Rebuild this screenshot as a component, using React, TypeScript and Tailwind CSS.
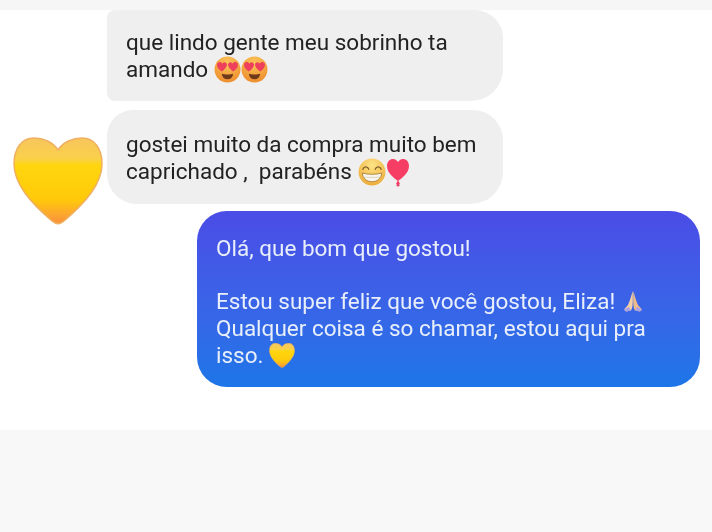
function GoldHeart({ className, id }: { className: string; id: string }) {
  return (
    <svg viewBox="0 0 90 88" className={className}>
      <defs>
        <linearGradient id={id} x1="0" y1="0" x2="0" y2="1">
          <stop offset="0" stopColor="#f7c65c" />
          <stop offset="0.24" stopColor="#fad04a" />
          <stop offset="0.32" stopColor="#ffd60e" />
          <stop offset="0.72" stopColor="#ffc90a" />
          <stop offset="0.88" stopColor="#fca92c" />
          <stop offset="1" stopColor="#f98f3b" />
        </linearGradient>
      </defs>
      <path
        d="M45 13C50 5 60 1 69 1C81 1 89 11 89 27C89 47 72 66 51 84C47 87.500 43 87.500 39 84C18 66 1 47 1 27C1 11 9 1 21 1C30 1 40 5 45 13Z"
        fill={`url(#${id})`}
        stroke="#f0b060"
        strokeWidth="1.500"
      />
    </svg>
  );
}

function HeartEyes({ id }: { id: string }) {
  return (
    <svg viewBox="0 0 26 26" className="w-[27px] h-[27px]">
      <defs>
        <radialGradient id={id} cx="50%" cy="25%" r="80%">
          <stop offset="0" stopColor="#fbc65a" />
          <stop offset="1" stopColor="#ed8a2a" />
        </radialGradient>
      </defs>
      <circle cx="13" cy="13" r="12.500" fill={`url(#${id})`} />
      <path d="M7.500 15C5 13 2.500 11 3 8C3.500 5.500 7 5 8 7.500C9 5 12.500 5.500 12.500 8.500C12.500 11 10 13 7.500 15Z" fill="#ee3f5d" />
      <path d="M18.500 15C21 13 23.500 11 23 8C22.500 5.500 19 5 18 7.500C17 5 13.500 5.500 13.500 8.500C13.500 11 16 13 18.500 15Z" fill="#ee3f5d" />
      <path d="M7.500 17C10 18 16 18 18.500 17C18 20.500 16 22.500 13 22.500C10 22.500 8 20.500 7.500 17Z" fill="#6f3a1c" />
    </svg>
  );
}

function Grin() {
  return (
    <svg viewBox="0 0 26 26" className="w-[28px] h-[28px]">
      <defs>
        <radialGradient id="grin" cx="50%" cy="25%" r="80%">
          <stop offset="0" stopColor="#fde487" />
          <stop offset="1" stopColor="#eda832" />
        </radialGradient>
      </defs>
      <circle cx="13" cy="13" r="12.500" fill="url(#grin)" />
      <path d="M4.500 10.500C5.500 7.500 9 7.500 10 10.500M16 10.500C17 7.500 20.500 7.500 21.500 10.500" fill="none" stroke="#80602a" strokeWidth="1.200" strokeLinecap="round" />
      <path d="M4 14C9 15.500 17 15.500 22 14C21.500 19 18 22 13 22C8 22 4.500 19 4 14Z" fill="#f8f6ee" stroke="#a57f3a" strokeWidth="0.800" />
      <path d="M5 18H21" stroke="#cfc3a8" strokeWidth="0.600" />
    </svg>
  );
}

function BalloonHeart() {
  return (
    <svg viewBox="0 0 24 30" className="w-[24px] h-[30px] mt-[2px]">
      <path d="M12 23C8 20 1 15 1 8C1 3.500 4 1 7 1C9.500 1 11 2.500 12 4C13 2.500 14.500 1 17 1C20 1 23 3.500 23 8C23 15 16 20 12 23Z" fill="#f63e64" />
      <path d="M12 22L10 26H14Z" fill="#f63e64" />
      <circle cx="12" cy="27" r="1.600" fill="#e8456a" />
    </svg>
  );
}

function Pray() {
  return (
    <svg viewBox="0 0 24 22" className="w-[24px] h-[22px]">
      <path d="M11.800 0C10 5 9 10 7 14L3 18.500L5 20.500L10 19.500C11.500 17 11.800 14 11.800 8Z" fill="#f4d0a6" />
      <path d="M12.200 0C14 5 15 10 17 14L21 18.500L19 20.500L14 19.500C12.500 17 12.200 14 12.200 8Z" fill="#eeb98b" />
      <path d="M3 18.500L5 20.500L10 19.500L8 16Z M21 18.500L19 20.500L14 19.500L16 16Z" fill="#a9a0e6" />
    </svg>
  );
}

export default function App() {
  return (
    <div className="w-[712px] h-[532px] flex flex-col bg-white overflow-hidden font-['Roboto',sans-serif] text-[22.5px] leading-[27px] blur-[0.4px]">
      <div className="h-[10px] bg-[#f6f6f6]" />

      <div className="h-[420px] flex">
        {/* avatar column */}
        <div className="w-[107px] pt-[127px] pl-[13px]">
          <GoldHeart id="bigHeart" className="w-[90px] h-[88px]" />
        </div>

        <div className="flex-1 flex flex-col">
          <div className="w-[396px] h-[91px] bg-[#efefef] rounded-tr-[28px] rounded-br-[32px] rounded-bl-[8px] rounded-tl-[8px] pl-[19px] pt-[19px] text-[#222222]">
            <div>que lindo gente meu sobrinho ta</div>
            <div className="flex items-center h-[27px]">
              amando
              <span className="ml-[6px] flex">
                <HeartEyes id="eyesA" />
                <HeartEyes id="eyesB" />
              </span>
            </div>
          </div>

          <div className="mt-[9px] w-[396px] h-[94px] bg-[#efefef] rounded-tl-[26px] rounded-tr-[30px] rounded-br-[32px] rounded-bl-[30px] pl-[19px] pt-[21px] text-[#222222]">
            <div>gostei muito da compra muito bem</div>
            <div className="flex items-center h-[27px]">
              <span className="whitespace-pre">caprichado ,  parabéns</span>
              <span className="ml-[6px] flex items-center">
                <Grin />
                <BalloonHeart />
              </span>
            </div>
          </div>

          <div className="mt-[7px] ml-[90px] w-[503px] h-[176px] rounded-[30px] bg-gradient-to-b from-[#4a4ce6] to-[#1b76e8] pl-[19px] pt-[24px] text-[#e8effb]">
            <div>Olá, que bom que gostou!</div>
            <div className="mt-[26px] flex items-center h-[27px]">
              Estou super feliz que você gostou, Eliza!
              <span className="ml-[6px] flex">
                <Pray />
              </span>
            </div>
            <div>Qualquer coisa é so chamar, estou aqui pra</div>
            <div className="flex items-center h-[27px]">
              isso.
              <span className="ml-[6px] flex">
                <GoldHeart id="smallHeart" className="w-[26px] h-[25px]" />
              </span>
            </div>
          </div>
        </div>
      </div>

      <div className="flex-1 bg-[#f8f8f8]" />
    </div>
  );
}
